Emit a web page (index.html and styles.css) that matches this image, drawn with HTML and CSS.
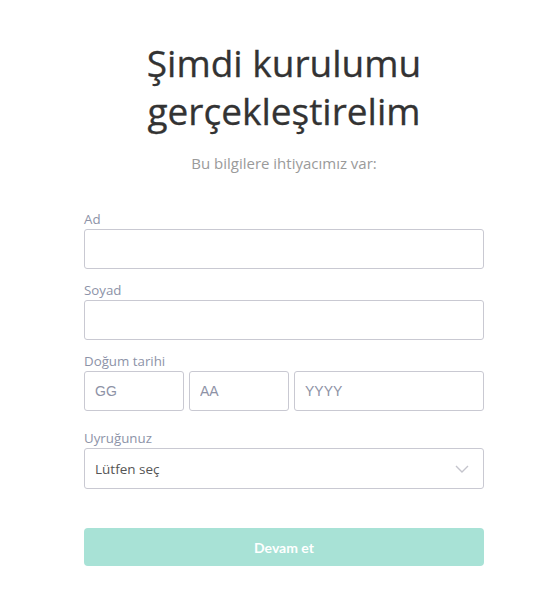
FILE: index.html
```html
<!DOCTYPE html>
<html lang="tr">
<head>
<meta charset="utf-8">
<title>Kurulum</title>
<link rel="stylesheet" href="styles.css">
</head>
<body>
<main class="page">
  <h1 class="title">Şimdi kurulumu gerçekleştirelim</h1>
  <p class="subtitle">Bu bilgilere ihtiyacımız var:</p>
  <form class="form">
    <div class="field">
      <label class="label">Ad</label>
      <input class="input" type="text">
    </div>
    <div class="field">
      <label class="label">Soyad</label>
      <input class="input" type="text">
    </div>
    <div class="field">
      <label class="label">Doğum tarihi</label>
      <div class="date-row">
        <input class="input" type="text" placeholder="GG">
        <input class="input" type="text" placeholder="AA">
        <input class="input" type="text" placeholder="YYYY">
      </div>
    </div>
    <div class="field field-select">
      <label class="label">Uyruğunuz</label>
      <div class="select">
        <span class="select-text">Lütfen seç</span>
        <svg class="chevron" width="14" height="8" viewBox="0 0 14 8"><path d="M1 1l6 6 6-6" fill="none" stroke="#c4c4cc" stroke-width="1.4"/></svg>
      </div>
    </div>
    <button class="button" type="button">Devam et</button>
  </form>
</main>
</body>
</html>
```
FILE: styles.css
```css
* { box-sizing: border-box; }
html, body { margin: 0; padding: 0; background: #fff; }
body { font-family: "Open Sans", "Noto Sans", sans-serif; }
.page {
  width: 400px;
  margin-left: 84px;
  padding-top: 39px;
}
.title {
  margin: 0;
  text-align: center;
  font-size: 37px;
  line-height: 48px;
  font-weight: 400;
  color: #333;
  padding: 0 40px;
  -webkit-text-stroke: 0.3px #333;
}
.subtitle {
  margin: 18px 0 0;
  text-align: center;
  font-size: 15px;
  line-height: 20px;
  color: #9a9a9a;
}
.form {
  margin-top: 37px;
  display: flex;
  flex-direction: column;
}
.field {
  display: flex;
  flex-direction: column;
  margin-bottom: 12px;
}
.label {
  font-size: 13.3px;
  line-height: 19px;
  color: #8d93a8;
}
.input {
  height: 40px;
  width: 100%;
  border: 1px solid #c9c9d2;
  border-radius: 3px;
  padding: 0 10px;
  font-family: "Liberation Sans", Arial, sans-serif;
  font-size: 14px;
  color: #333;
  background: #fff;
  outline: none;
}
.input::placeholder { color: #8e92a6; }
.date-row {
  display: grid;
  grid-template-columns: 100px 100px 1fr;
  gap: 5px;
}
.field-select { margin-top: 6px; }
.select {
  height: 41px;
  border: 1px solid #c9c9d2;
  border-radius: 3px;
  padding: 0 14px 0 10px;
  display: flex;
  align-items: center;
  justify-content: space-between;
}
.select-text {
  font-size: 13.5px;
  color: #555;
}
.button {
  margin-top: 27px;
  height: 38px;
  border: none;
  border-radius: 4px;
  background: #a8e2d6;
  color: #fff;
  font-family: Lato, "Open Sans", sans-serif;
  font-weight: 700;
  font-size: 14px;
}
```
